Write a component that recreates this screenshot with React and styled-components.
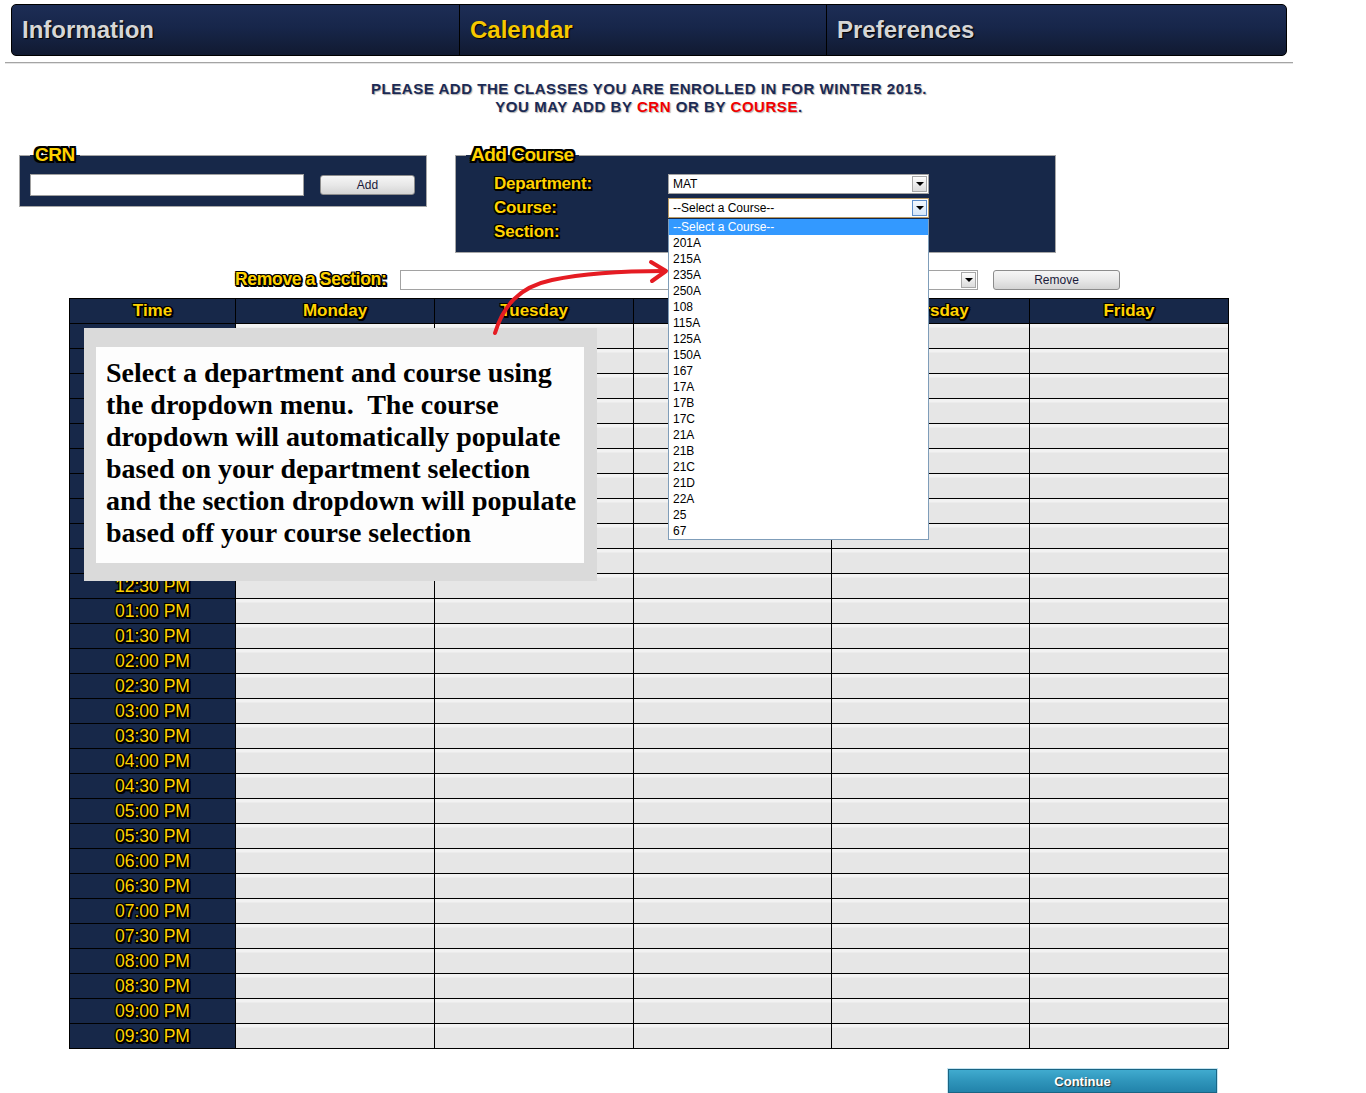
import React from 'react';
import styled, { createGlobalStyle, css } from 'styled-components';

const GlobalStyle = createGlobalStyle`
    html, body {
        margin: 0;
        padding: 0;
        background: #fff;
        font-family: "Liberation Sans", Arial, sans-serif;
    }
`;

const NAVY = '#172849';
const GOLD = '#ffd200';

const outline = css`
    color: ${GOLD};
    text-shadow: -1px -1px 0 #000, 1px -1px 0 #000, -1px 1px 0 #000, 1px 1px 0 #000,
        2px 2px 0 #000, 0 2px 0 #000, 2px 0 0 #000;
`;

const heavyOutline = css`
    color: ${GOLD};
    text-shadow: -2px -2px 0 #000, 2px -2px 0 #000, -2px 2px 0 #000, 2px 2px 0 #000,
        0 -2px 0 #000, 0 2px 0 #000, -2px 0 0 #000, 2px 0 0 #000;
`;

const TABS = [
    { label: 'Information', active: false },
    { label: 'Calendar', active: true },
    { label: 'Preferences', active: false }
];

const COURSES = [
    '--Select a Course--', '201A', '215A', '235A', '250A', '108', '115A', '125A', '150A',
    '167', '17A', '17B', '17C', '21A', '21B', '21C', '21D', '22A', '25', '67'
];

const DAYS = ['Monday', 'Tuesday', 'Wednesday', 'Thursday', 'Friday'];

const TIMES = Array.from({ length: 29 }, (_, i) => {
    const mins = 7 * 60 + 30 + i * 30;
    const h24 = Math.floor(mins / 60);
    const m = mins % 60;
    const h12 = h24 % 12 === 0 ? 12 : h24 % 12;
    return `${String(h12).padStart(2, '0')}:${m === 0 ? '00' : '30'} ${h24 < 12 ? 'AM' : 'PM'}`;
});

const App = () => (
    <Page>
        <GlobalStyle />
        <NavBar>
            {TABS.map(tab => (
                <Tab key={tab.label} active={tab.active}>
                    {tab.label}
                </Tab>
            ))}
        </NavBar>
        <Rule />
        <Intro>
            PLEASE ADD THE CLASSES YOU ARE ENROLLED IN FOR WINTER 2015.
            <br />
            YOU MAY ADD BY <Red>CRN</Red> OR BY <Red>COURSE</Red>.
        </Intro>

        <FormRow>
            <Box w={408}>
                <Legend>CRN</Legend>
                <CrnRow>
                    <TextInput />
                    <GreyButton w={95}>Add</GreyButton>
                </CrnRow>
            </Box>
            <Box w={601}>
                <Legend>Add Course</Legend>
                <CourseGrid>
                    <FieldLabel>Department:</FieldLabel>
                    <SelectBox>
                        MAT
                        <ArrowBox />
                    </SelectBox>
                    <FieldLabel>Course:</FieldLabel>
                    <SelectWrap>
                        <SelectBox focused>
                            --Select a Course--
                            <ArrowBox focused />
                        </SelectBox>
                        <OptionList>
                            {COURSES.map((c, i) => (
                                <Option key={c} selected={i === 0}>
                                    {c}
                                </Option>
                            ))}
                        </OptionList>
                    </SelectWrap>
                    <FieldLabel>Section:</FieldLabel>
                    <SelectBox>
                        <ArrowBox />
                    </SelectBox>
                </CourseGrid>
            </Box>
        </FormRow>

        <RemoveRow>
            <RemoveLabel>Remove a Section:</RemoveLabel>
            <SelectBox w={578}>
                <ArrowBox />
            </SelectBox>
            <GreyButton w={127}>Remove</GreyButton>
        </RemoveRow>

        <TableWrap>
            <Schedule>
                <HeadCell>Time</HeadCell>
                {DAYS.map(d => (
                    <HeadCell key={d}>{d}</HeadCell>
                ))}
                {TIMES.map(t => (
                    <React.Fragment key={t}>
                        <TimeCell>{t}</TimeCell>
                        {DAYS.map(d => (
                            <SlotCell key={d} />
                        ))}
                    </React.Fragment>
                ))}
            </Schedule>
            <Callout>
                <CalloutInner>
                    Select a department and course using
                    <br />
                    the dropdown menu.&nbsp; The course
                    <br />
                    dropdown will automatically populate
                    <br />
                    based on your department selection
                    <br />
                    and the section dropdown will populate
                    <br />
                    based off your course selection
                </CalloutInner>
            </Callout>
        </TableWrap>

        <ContinueButton>Continue</ContinueButton>

        <Arrow viewBox="0 0 185 85" width="185" height="85">
            <path
                d="M5 78 C 13 52, 28 32, 62 25 S 135 16, 174 16"
                fill="none"
                stroke="#e51c23"
                strokeWidth="4"
                strokeLinecap="round"
            />
            <path
                d="M161 7 L 176 16 L 162 26"
                fill="none"
                stroke="#e51c23"
                strokeWidth="4"
                strokeLinecap="round"
                strokeLinejoin="round"
            />
        </Arrow>
    </Page>
);

export default App;

const Page = styled.div`
    position: relative;
    width: 1366px;
    height: 1093px;
    overflow: hidden;
    padding-top: 4px;
    box-sizing: border-box;
`;

const NavBar = styled.nav`
    display: grid;
    grid-template-columns: 447px 367px 1fr;
    width: 1276px;
    height: 52px;
    margin-left: 11px;
    box-sizing: border-box;
    border: 1px solid #000;
    border-radius: 5px;
    background: linear-gradient(#1d2d55 0%, #17264a 45%, #111a31 100%);
    overflow: hidden;
`;

const Tab = styled.div`
    padding-left: 10px;
    line-height: 50px;
    font-size: 24px;
    font-weight: bold;
    color: ${p => (p.active ? '#f6c800' : '#d6d6d6')};
    text-shadow: 1px 1px 1px #000;
    & + & {
        border-left: 1px solid #000;
    }
`;

const Rule = styled.div`
    width: 1288px;
    margin: 6px 0 0 5px;
    border-top: 1px solid #a4a4a4;
    border-bottom: 1px solid #e4e4e4;
`;

const Intro = styled.p`
    width: 1288px;
    margin: 16px 0 0 5px;
    text-align: center;
    font-size: 15px;
    line-height: 18px;
    font-weight: bold;
    letter-spacing: 0.55px;
    color: #1b2a55;
    text-shadow: 1px 1px 1px #b0b0b0;
`;

const Red = styled.span`
    color: #f00000;
`;

const FormRow = styled.div`
    display: flex;
    align-items: flex-start;
    gap: 28px;
    margin: 29px 0 0 19px;
`;

const Box = styled.fieldset`
    width: ${p => p.w}px;
    box-sizing: border-box;
    margin: 0;
    padding: 9px 10px 10px;
    border: 1px solid #a6a6a6;
    background: ${NAVY};
`;

const Legend = styled.legend`
    padding: 0 5px;
    font-size: 19px;
    line-height: 20px;
    font-weight: bold;
    letter-spacing: -0.5px;
    ${heavyOutline};
`;

const CrnRow = styled.div`
    display: flex;
    align-items: center;
    gap: 16px;
`;

const TextInput = styled.div`
    width: 274px;
    height: 22px;
    box-sizing: border-box;
    background: #fff;
    border: 1px solid #a0a0a0;
`;

const GreyButton = styled.button`
    width: ${p => p.w}px;
    height: 20px;
    padding: 0;
    border: 1px solid #8c8c8c;
    border-radius: 3px;
    background: linear-gradient(#f6f6f6 0%, #e8e8e8 50%, #d4d4d4 100%);
    font-family: "Liberation Sans", Arial, sans-serif;
    font-size: 12px;
    color: #1a1a3a;
`;

const CourseGrid = styled.div`
    display: grid;
    grid-template-columns: 174px 261px;
    grid-auto-rows: 20px;
    row-gap: 4px;
    align-items: center;
    margin-left: 28px;
`;

const FieldLabel = styled.div`
    font-size: 17px;
    font-weight: bold;
    letter-spacing: -0.2px;
    ${outline};
`;

const SelectWrap = styled.div`
    position: relative;
    height: 20px;
`;

const SelectBox = styled.div`
    position: relative;
    width: ${p => (p.w ? `${p.w}px` : '261px')};
    height: 20px;
    box-sizing: border-box;
    padding-left: 4px;
    background: #fff;
    border: 1px solid ${p => (p.focused ? '#b89a64' : '#a2a2a2')};
    font-size: 12px;
    line-height: 18px;
    color: #000;
`;

const ArrowBox = styled.span`
    position: absolute;
    top: 1px;
    right: 1px;
    width: 15px;
    height: 16px;
    box-sizing: border-box;
    border: 1px solid ${p => (p.focused ? '#5d8ecb' : '#a8a8a8')};
    background: ${p =>
        p.focused ? 'linear-gradient(#f4f9ff, #d6e6f8)' : 'linear-gradient(#fdfdfd, #dcdcdc)'};
    &::after {
        content: '';
        position: absolute;
        left: 3px;
        top: 5px;
        border-left: 4px solid transparent;
        border-right: 4px solid transparent;
        border-top: 4px solid #000;
    }
`;

const OptionList = styled.ul`
    position: absolute;
    top: 21px;
    left: 0;
    z-index: 5;
    width: 261px;
    margin: 0;
    padding: 0;
    list-style: none;
    box-sizing: border-box;
    background: #fff;
    border: 1px solid #7f9db9;
    border-top: none;
`;

const Option = styled.li`
    height: 16px;
    padding-left: 4px;
    font-size: 12px;
    line-height: 16px;
    color: ${p => (p.selected ? '#fff' : '#000')};
    background: ${p => (p.selected ? '#3399ff' : 'transparent')};
`;

const RemoveRow = styled.div`
    display: flex;
    align-items: center;
    gap: 15px;
    height: 21px;
    margin: 16px 0 0 235px;
`;

const RemoveLabel = styled.div`
    width: 150px;
    font-size: 17.5px;
    font-weight: bold;
    letter-spacing: -0.3px;
    white-space: nowrap;
    ${outline};
`;

const TableWrap = styled.div`
    position: relative;
    width: 1160px;
    margin: 8px 0 0 69px;
`;

const Schedule = styled.div`
    display: grid;
    grid-template-columns: 165px 198px 198px 197px 197px 198px;
    grid-auto-rows: 24px;
    gap: 1px;
    padding: 1px;
    background: #000;
`;

const headText = css`
    display: flex;
    align-items: center;
    justify-content: center;
    background: ${NAVY};
    font-size: 17px;
    font-weight: bold;
    ${outline};
`;

const HeadCell = styled.div`
    ${headText};
`;

const TimeCell = styled.div`
    ${headText};
    font-weight: normal;
    font-size: 17.5px;
`;

const SlotCell = styled.div`
    background: linear-gradient(#f2f2f2 0, #f2f2f2 3px, #e6e6e6 4px, #e6e6e6 100%);
`;

const Callout = styled.div`
    position: absolute;
    left: 15px;
    top: 30px;
    z-index: 2;
    width: 513px;
    height: 253px;
    box-sizing: border-box;
    padding: 19px 13px 18px 12px;
    background: #dadada;
`;

const CalloutInner = styled.div`
    height: 100%;
    box-sizing: border-box;
    padding: 10px 0 0 10px;
    background: #fdfdfd;
    font-family: "Liberation Serif", "Times New Roman", serif;
    font-weight: bold;
    font-size: 28px;
    line-height: 32px;
    white-space: nowrap;
    color: #000;
`;

const ContinueButton = styled.button`
    display: block;
    width: 269px;
    height: 24px;
    margin: 20px 0 0 948px;
    padding: 0;
    border: 1px solid #1a6483;
    box-shadow: 0 0 0 1px #c6e6f2;
    background: linear-gradient(#40abcf 0%, #2f95bb 50%, #2283aa 100%);
    font-family: "Liberation Sans", Arial, sans-serif;
    font-size: 13px;
    font-weight: bold;
    color: #fff;
    text-shadow: 1px 1px 1px #333;
`;

const Arrow = styled.svg`
    position: absolute;
    left: 490px;
    top: 255px;
    z-index: 6;
    overflow: visible;
`;
